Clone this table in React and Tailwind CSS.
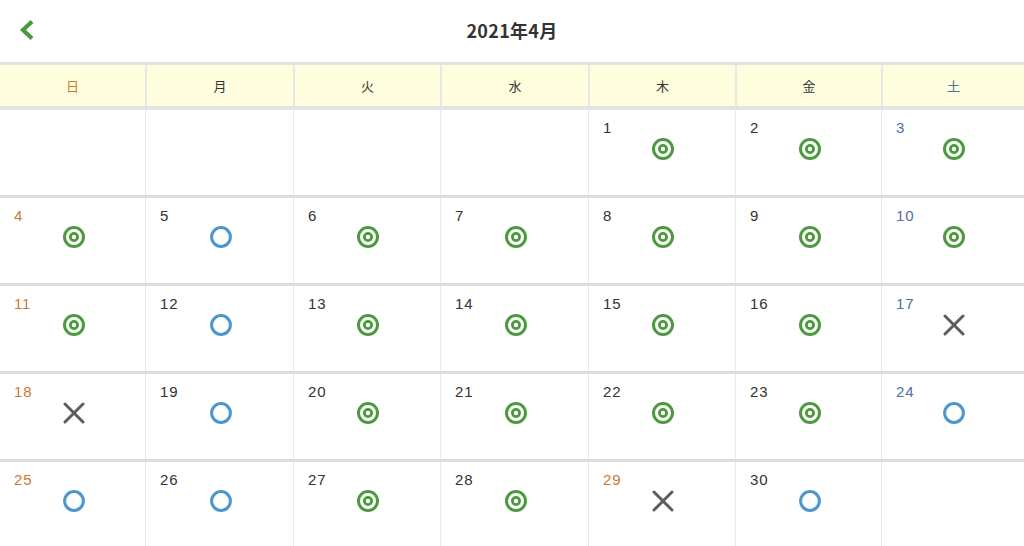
import React from 'react';

const WEEK = ['日', '月', '火', '水', '木', '金', '土'];

// marks: d = ◎, o = ○, x = ×
const DAYS = [
  null, null, null, null, [1, 'd'], [2, 'd'], [3, 'd'],
  [4, 'd'], [5, 'o'], [6, 'd'], [7, 'd'], [8, 'd'], [9, 'd'], [10, 'd'],
  [11, 'd'], [12, 'o'], [13, 'd'], [14, 'd'], [15, 'd'], [16, 'd'], [17, 'x'],
  [18, 'x'], [19, 'o'], [20, 'd'], [21, 'd'], [22, 'd'], [23, 'd'], [24, 'o'],
  [25, 'o'], [26, 'o'], [27, 'd'], [28, 'd'], [29, 'x', true], [30, 'o'], null,
];

const DoubleCircle = () => (
  <svg width="22" height="22" viewBox="0 0 22 22">
    <circle cx="11" cy="11" r="9.5" fill="none" stroke="#4b9a3d" strokeWidth="3" />
    <circle cx="11" cy="11" r="3.6" fill="none" stroke="#4b9a3d" strokeWidth="2.8" />
  </svg>
);

const Circle = () => (
  <svg width="22" height="22" viewBox="0 0 22 22">
    <circle cx="11" cy="11" r="9.4" fill="none" stroke="#4b97cb" strokeWidth="3" />
  </svg>
);

const Cross = () => (
  <svg width="22" height="22" viewBox="0 0 22 22">
    <path d="M2 2 L20 20 M20 2 L2 20" stroke="#5d5d5d" strokeWidth="3" strokeLinecap="round" />
  </svg>
);

const Mark = ({ type }) => {
  if (type === 'd') return <DoubleCircle />;
  if (type === 'o') return <Circle />;
  return <Cross />;
};

const dayColor = (col, holiday) => {
  if (col === 0 || holiday) return 'text-[#c97a35]';
  if (col === 6) return 'text-[#4d6ea8]';
  return 'text-[#333333]';
};

export default function App() {
  const rows = [0, 1, 2, 3, 4].map(r => DAYS.slice(r * 7, r * 7 + 7));

  return (
    <div className="h-screen overflow-hidden bg-white font-['Noto_Sans_CJK_JP','Noto_Sans',sans-serif]">
      {/* Header */}
      <div className="h-[62px] flex items-center justify-center relative">
        <button className="absolute left-[16px] top-[16px] p-0.5">
          <svg width="18" height="24" viewBox="0 0 18 24">
            <path d="M14 3.5 L5 12 L14 20.5" fill="none" stroke="#4b9a3d" strokeWidth="4.2" strokeLinejoin="miter" />
          </svg>
        </button>
        <h1 className="text-[18px] font-bold text-[#333333] tracking-[0.3px] -mt-[2px]">2021年4月</h1>
      </div>

      {/* Week labels */}
      <div className="grid grid-cols-[145px_148px_147px_148px_147px_146px_1fr] bg-[#fefede] border-t-[3px] border-b-4 border-[#e3e3e3] h-[48px]">
        {WEEK.map((w, i) => (
          <div
            key={w}
            className={`flex items-center justify-center text-[13px] ${i > 0 ? 'border-l-2 border-[#e8e8e8]' : ''} ${i === 0 ? 'text-[#c97a35]' : i === 6 ? 'text-[#4d6ea8]' : 'text-[#333333]'}`}
          >
            {w}
          </div>
        ))}
      </div>

      {/* Days */}
      {rows.map((row, r) => (
        <div
          key={r}
          className="grid grid-cols-[145px_148px_147px_148px_147px_146px_1fr] h-[88px] border-b-[3px] border-[#dcdcdc]"
        >
          {row.map((cell, i) => (
            <div key={i} className={`pt-[8px] ${i > 0 ? 'border-l border-[#e8e8e8]' : ''}`}>
              {cell && (
                <>
                  <div className={`pl-[14px] text-[15px] leading-[20px] tracking-[0.8px] font-['Liberation_Sans',sans-serif] ${dayColor(i, cell[2])}`}>
                    {cell[0]}
                  </div>
                  <div className="flex justify-center pl-[2px]">
                    <Mark type={cell[1]} />
                  </div>
                </>
              )}
            </div>
          ))}
        </div>
      ))}
    </div>
  );
}
